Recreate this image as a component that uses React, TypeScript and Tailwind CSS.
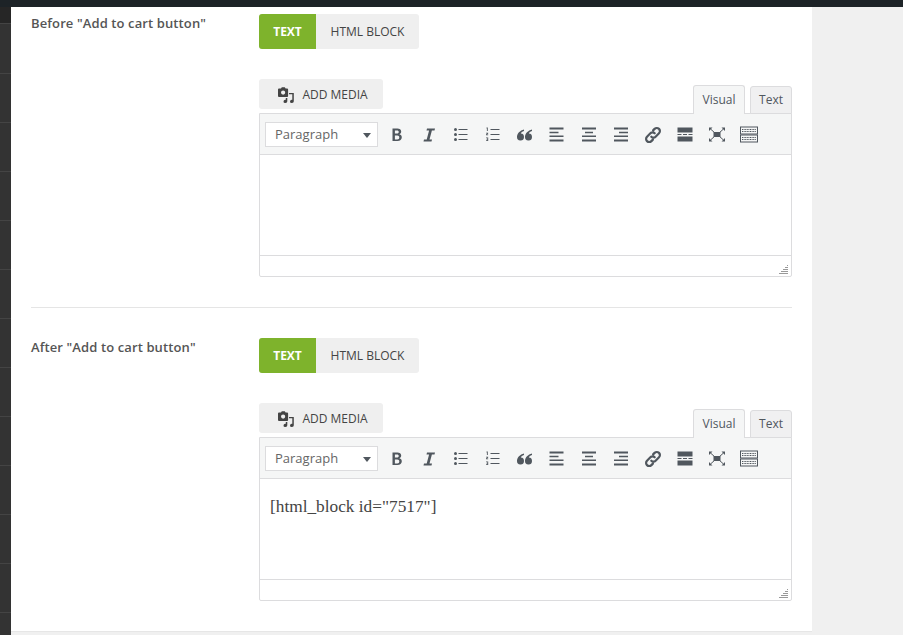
const sidebarRows = Array.from({ length: 12 });

function MediaIcon() {
  return (
    <svg width="17" height="17" viewBox="0 0 17 17" className="text-[#444]" fill="currentColor">
      <path
        fillRule="evenodd"
        d="M1 1.500h2l.8-1.300h3L7.600 1.500h1.500a1 1 0 0 1 1 1v6.500a1 1 0 0 1-1 1H1a1 1 0 0 1-1-1V2.500a1 1 0 0 1 1-1zm4.100 2a2.100 2.100 0 1 0 0 4.200 2.100 2.100 0 0 0 0-4.200z"
      />
      <path d="M11 6h4.800v8.300a1.900 1.700 0 1 1-1.500-1.600V7.300H11z" />
      <path d="M9.300 11v3.300a1.900 1.700 0 1 1-1.500-1.600V11z" />
    </svg>
  );
}

function ToolIcon({ children }: { children: React.ReactNode }) {
  return (
    <span className="flex h-5 w-8 items-center justify-center">
      <svg width="20" height="20" viewBox="0 0 20 20" className="text-[#50575e]" fill="currentColor">
        {children}
      </svg>
    </span>
  );
}

function Toolbar() {
  return (
    <div className="flex h-[41px] items-center border-b border-[#dcdcde] bg-[#f5f6f6] pl-[5px]">
      <div className="flex h-[25px] w-[113px] items-center justify-between border border-[#dcdcde] bg-white pl-[9px] pr-[6px] pt-[2px] text-[13px] text-[#666]">
        Paragraph
        <span className="h-0 w-0 border-x-[4px] border-t-[5px] border-x-transparent border-t-[#50575e]" />
      </div>
      <div className="ml-[3px] mt-[2px] flex items-center">
        <ToolIcon>
          <path
            fillRule="evenodd"
            d="M5.500 3.500h4.800c2.400 0 3.900 1.100 3.900 3.100 0 1.300-.7 2.200-1.800 2.700 1.500.4 2.400 1.500 2.400 3 0 2.400-1.700 3.700-4.400 3.700H5.500zm2.400 2v3h2.100c1.100 0 1.800-.6 1.800-1.500s-.7-1.500-1.800-1.500zm0 5v4h2.400c1.300 0 2-.8 2-2s-.7-2-2-2z"
          />
        </ToolIcon>
        <ToolIcon>
          <path d="M8 3.500h8l-.5 2h-2.600l-2.400 9h2.500l-.5 2H4.500l.5-2h2.700l2.400-9H7.500z" />
        </ToolIcon>
        <ToolIcon>
          <circle cx="4.500" cy="4.500" r="1.500" />
          <circle cx="4.500" cy="9.500" r="1.500" />
          <circle cx="4.500" cy="14.500" r="1.500" />
          <path d="M7.500 4h9v1h-9zM7.500 9h9v1h-9zM7.500 14h9v1h-9z" />
        </ToolIcon>
        <ToolIcon>
          <path d="M3.500 2.500h1.300v3.400h-.9V3.400h-.4zM3 7.800h2.200v.8l-1.200 1h1.200v.7H3v-.8l1.200-1H3zM3 12.500h2.200v3.400H3v-.7h1.300v-.6H3.500v-.6h.8v-.7H3z" />
          <path d="M7.500 4h9v1h-9zM7.500 9h9v1h-9zM7.500 14h9v1h-9z" />
        </ToolIcon>
        <ToolIcon>
          <path d="M9 4.500C5 5.500 2 8.500 2 12a3.500 3.500 0 1 0 3.800-3.400c.4-1.200 1.500-2 3.200-2.500z" />
          <path d="M17 4.500c-4 1-7 4-7 7.500a3.500 3.500 0 1 0 3.800-3.400c.4-1.200 1.500-2 3.200-2.500z" />
        </ToolIcon>
        <ToolIcon>
          <path d="M2.500 2.500h14v2h-14zM2.500 6.800h9v1.500h-9zM2.500 10.500h14V12h-14zM2.500 14.500h14v2h-14z" />
        </ToolIcon>
        <ToolIcon>
          <path d="M3 2.500h14v2H3zM6 6.800h8v1.500H6zM3 10.500h14V12H3zM3 14.500h14v2H3z" />
        </ToolIcon>
        <ToolIcon>
          <path d="M3 2.500h14v2H3zM8 6.800h9v1.500H8zM3 10.500h14V12H3zM3 14.500h14v2H3z" />
        </ToolIcon>
        <ToolIcon>
          <path
            d="M8.300 11.700a3 3 0 0 0 4.300 0l3.400-3.400a3.100 3.100 0 0 0-4.400-4.400l-1.500 1.500M11.700 8.300a3 3 0 0 0-4.300 0L4 11.700a3.100 3.100 0 0 0 4.400 4.400l1.500-1.500"
            fill="none"
            stroke="currentColor"
            strokeWidth="2.200"
            strokeLinecap="round"
          />
        </ToolIcon>
        <ToolIcon>
          <path d="M2.500 2.500h15v5h-15zM2.500 11.500h15v5h-15zM2.500 9h4v1h-4zM8 9h4v1H8zM13.500 9h4v1h-4z" />
        </ToolIcon>
        <ToolIcon>
          <rect x="6.500" y="7" width="7" height="5" />
          <path d="M2 2.500h3.500L2 6zM18 2.500V6l-3.500-3.500zM2 16.500V13l3.500 3.500zM18 16.500h-3.500L18 13z" />
          <path d="M3.500 4 8 8M16.500 4 12 8M3.500 15 8 11M16.500 15 12 11" stroke="currentColor" strokeWidth="1" />
        </ToolIcon>
        <ToolIcon>
          <rect x="1.500" y="2" width="17" height="7" fill="none" stroke="currentColor" />
          <rect x="1.500" y="10" width="17" height="7" fill="none" stroke="currentColor" />
          <path d="M3 4.500h14M3 6.500h14M3 12.500h14M3 14.500h14" stroke="currentColor" strokeWidth="1.200" strokeDasharray="1 .6" />
        </ToolIcon>
      </div>
    </div>
  );
}

function Editor({ content }: { content?: string }) {
  return (
    <div className="mt-[6px] w-[533px]">
      <div className="flex items-end justify-between">
        <button className="mb-[4px] flex h-[30px] w-[124px] items-center justify-center gap-[7px] rounded-[3px] bg-[#efefef] pl-[4px] pt-[2px] text-[12px] text-[#444]">
          <MediaIcon />
          ADD MEDIA
        </button>
        <div className="flex translate-y-px items-end gap-[5px] text-[12px] text-[#50575e]">
          <span className="z-10 flex h-[29px] w-[52px] items-center justify-center rounded-t-[3px] border border-b-0 border-[#dcdcde] bg-[#f5f6f6]">
            Visual
          </span>
          <span className="flex h-[28px] w-[42px] items-center justify-center rounded-t-[3px] border border-[#dcdcde] bg-[#f0f0f1]">
            Text
          </span>
        </div>
      </div>
      <div className="rounded-b-[2px] border border-[#dcdcde] bg-white">
        <Toolbar />
        <div className="h-[100px] px-[10px] pt-[16px] font-['Liberation_Serif',serif] text-[17.3px] leading-[24px] text-[#444]">
          {content}
        </div>
        <div className="relative h-[21px] border-t border-[#dcdcde]">
          <svg width="10" height="10" viewBox="0 0 10 10" className="absolute bottom-[2px] right-[2px] text-[#999]" fill="currentColor">
            <path d="M8 1h1v1H8zM6 3h3v1H6zM4 5h5v1H4zM2 7h7v1H2zM0 9h9v1H0z" />
          </svg>
        </div>
      </div>
    </div>
  );
}

function Field({ label, content }: { label: string; content?: string }) {
  return (
    <div className="flex">
      <div className="w-[228px] shrink-0 text-[13px] font-semibold leading-[18px] tracking-[0.11px] text-[#555]">{label}</div>
      <div>
        <div className="flex h-[35px] w-[160px] overflow-hidden rounded-[3px] bg-[#efefef] text-[12px]">
          <span className="flex w-[57px] items-center justify-center bg-[#7eb32c] font-bold text-white">TEXT</span>
          <span className="flex flex-1 items-center justify-center font-medium text-[#444]">HTML BLOCK</span>
        </div>
        <div className="h-[24px]" />
        <Editor content={content} />
      </div>
    </div>
  );
}

export default function App() {
  return (
    <div className="flex h-[635px] w-[903px] flex-col overflow-hidden bg-[#f0f0f0] font-['Open_Sans',sans-serif]">
      <div className="h-[7px] shrink-0 bg-[#1d2327]" />
      <div className="flex min-h-0 flex-1">
        <div className="w-[11px] shrink-0 bg-[#333]">
          <div className="h-[16px] bg-[#262626]" />
          <div className="h-[50px] border-t border-[#444]" />
          {sidebarRows.map((_, i) => (
            <div key={i} className="h-[49px] border-t border-[#444]" />
          ))}
        </div>
        <div className="h-[625px] w-[801px] border-b border-[#e6e6e6] bg-white px-[20px] pt-[7px]">
          <Field label={'Before "Add to cart button"'} />
          <div className="my-[30px] h-px w-[761px] bg-[#e5e5e5]" />
          <Field label={'After "Add to cart button"'} content={'[html_block id="7517"]'} />
        </div>
      </div>
    </div>
  );
}
